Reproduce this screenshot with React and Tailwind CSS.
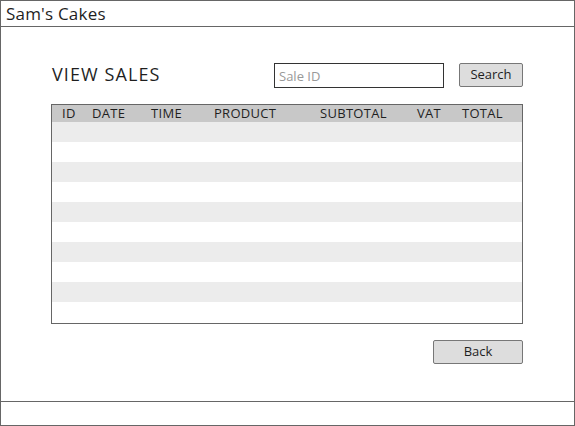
const columns = ["ID", "DATE", "TIME", "PRODUCT", "SUBTOTAL", "VAT", "TOTAL"];
const rows = Array.from({ length: 10 }, (_, i) => i);

export default function App() {
  return (
    <div
      className="w-[575px] h-[426px] border border-[#666] flex flex-col bg-white text-[#1f1f1f]"
      style={{ fontFamily: '"Open Sans", "Liberation Sans", sans-serif' }}
    >
      <div className="h-[26px] border-b border-[#666] flex items-center pl-[5px] text-[17px] leading-none tracking-[0.2px]">
        Sam's Cakes
      </div>

      <div className="flex-1 pl-[50px] pr-[51px] pt-[36px]">
        <div className="flex items-start">
          <div className="text-[18px] leading-none pt-[2px] ml-[1px] tracking-[1.1px]">VIEW SALES</div>
          <input
            type="text"
            placeholder="Sale ID"
            className="ml-auto w-[170px] h-[25px] border border-[#333] px-[4px] text-[13px] placeholder:text-[#999] outline-none"
          />
          <button className="ml-[15px] w-[64px] h-[24px] border border-[#777] rounded-[2px] bg-[#ddd] text-[13px]">
            Search
          </button>
        </div>

        <div className="mt-[16px] border border-[#666] h-[220px]">
          <div className="grid grid-cols-[30px_59px_63px_106px_97px_45px_1fr] h-[17px] bg-[#c8c8c8] text-[13px] leading-[17px] tracking-[0.3px]">
            {columns.map((c) => (
              <div key={c} className="pl-[10px]">
                {c}
              </div>
            ))}
          </div>
          {rows.map((r) => (
            <div
              key={r}
              className={r % 2 === 0 ? "h-[20px] bg-[#ececec]" : "h-[20px] bg-white"}
            />
          ))}
        </div>

        <div className="flex justify-end mt-[16px]">
          <button className="w-[90px] h-[24px] border border-[#777] rounded-[2px] bg-[#ddd] text-[13px]">
            Back
          </button>
        </div>
      </div>

      <div className="h-[24px] border-t border-[#666]" />
    </div>
  );
}
